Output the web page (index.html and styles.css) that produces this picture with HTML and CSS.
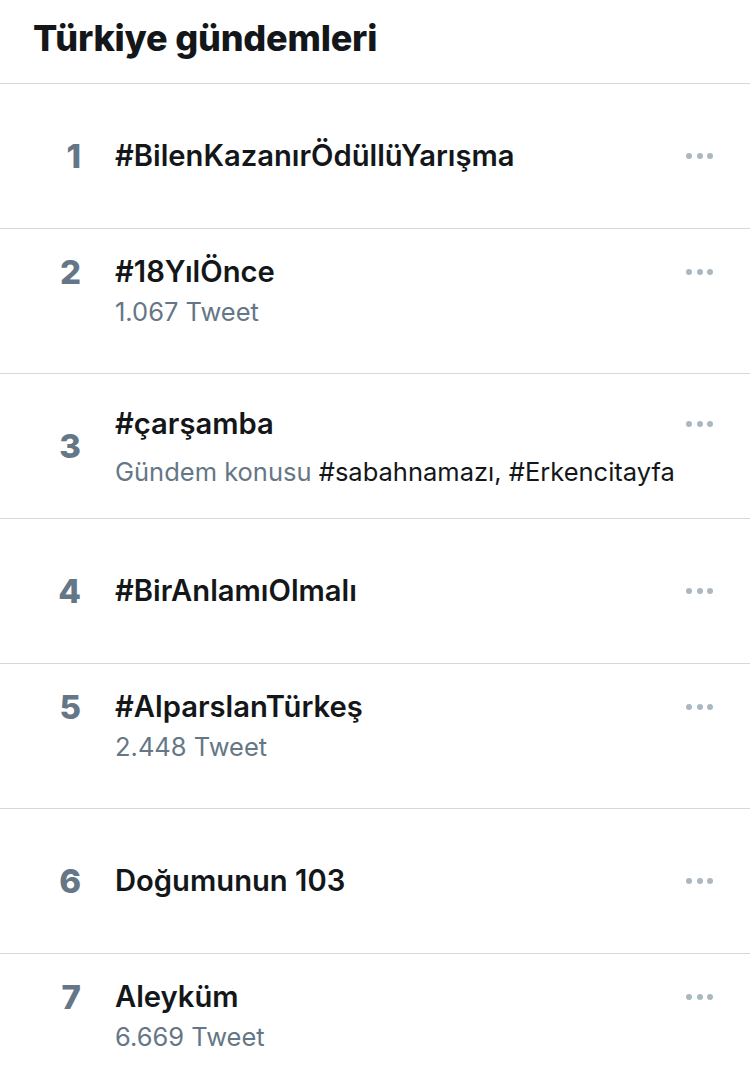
FILE: index.html
```html
<!DOCTYPE html>
<html lang="tr">
<head>
<meta charset="utf-8">
<title>Türkiye gündemleri</title>
<link rel="stylesheet" href="styles.css">
</head>
<body>
<div class="page">
  <header class="head"><h1 class="head-title">Türkiye gündemleri</h1></header>
  <ul class="list">
    <li class="trend">
      <span class="rank">1</span>
      <div class="body">
        <div class="top"><span class="name">#BilenKazanırÖdüllüYarışma</span><span class="more"><i></i><i></i><i></i></span></div>
      </div>
    </li>
    <li class="trend trend-count">
      <span class="rank">2</span>
      <div class="body">
        <div class="top"><span class="name">#18YılÖnce</span><span class="more"><i></i><i></i><i></i></span></div>
        <div class="meta">1.067 Tweet</div>
      </div>
    </li>
    <li class="trend trend-topic">
      <span class="rank">3</span>
      <div class="body">
        <div class="top"><span class="name">#çarşamba</span><span class="more"><i></i><i></i><i></i></span></div>
        <div class="meta meta-topic">Gündem konusu <span class="tags">#sabahnamazı, #Erkencitayfa</span></div>
      </div>
    </li>
    <li class="trend">
      <span class="rank">4</span>
      <div class="body">
        <div class="top"><span class="name">#BirAnlamıOlmalı</span><span class="more"><i></i><i></i><i></i></span></div>
      </div>
    </li>
    <li class="trend trend-count">
      <span class="rank">5</span>
      <div class="body">
        <div class="top"><span class="name">#AlparslanTürkeş</span><span class="more"><i></i><i></i><i></i></span></div>
        <div class="meta">2.448 Tweet</div>
      </div>
    </li>
    <li class="trend">
      <span class="rank">6</span>
      <div class="body">
        <div class="top"><span class="name">Doğumunun 103</span><span class="more"><i></i><i></i><i></i></span></div>
      </div>
    </li>
    <li class="trend trend-count">
      <span class="rank">7</span>
      <div class="body">
        <div class="top"><span class="name">Aleyküm</span><span class="more"><i></i><i></i><i></i></span></div>
        <div class="meta">6.669 Tweet</div>
      </div>
    </li>
  </ul>
</div>
</body>
</html>
```
FILE: styles.css
```css
* { box-sizing: border-box; }
html, body { margin: 0; padding: 0; background: #fff; }
body {
  font-family: Inter, "Liberation Sans", Arial, sans-serif;
  color: #14171a;
  overflow: hidden;
  height: 1077px;
}
.page { width: 750px; }
.head {
  height: 83px;
  display: flex;
  align-items: center;
  padding-left: 33px;
  padding-bottom: 7px;
}
.head-title {
  margin: 0;
  font-size: 36px;
  font-weight: 800;
  letter-spacing: -0.2px;
}
.list { list-style: none; margin: 0; padding: 0; }
.trend {
  height: 145px;
  border-top: 1px solid #d8d8d8;
  display: flex;
  align-items: center;
  padding-right: 37px;
}
.rank {
  width: 115px;
  flex: none;
  padding-right: 34px;
  text-align: right;
  font-size: 33px;
  font-weight: 800;
  line-height: 36px;
  color: #657786;
}
.body { flex: 1; min-width: 0; }
.top { display: flex; align-items: center; height: 36px; }
.name {
  font-size: 29.2px;
  font-weight: 600;
  line-height: 36px;
  white-space: nowrap;
}
.more {
  margin-left: auto;
  display: flex;
  gap: 4.5px;
}
.more i {
  width: 6px;
  height: 6px;
  border-radius: 50%;
  background: #aab8c2;
}
.meta {
  font-size: 25.5px;
  line-height: 44px;
  color: #657786;
  white-space: nowrap;
}
.trend-count { align-items: flex-start; padding-top: 25px; }
.trend-topic .body { padding-top: 8px; }
.meta-topic { margin-top: 8px; }
.tags { color: #14171a; }
```
